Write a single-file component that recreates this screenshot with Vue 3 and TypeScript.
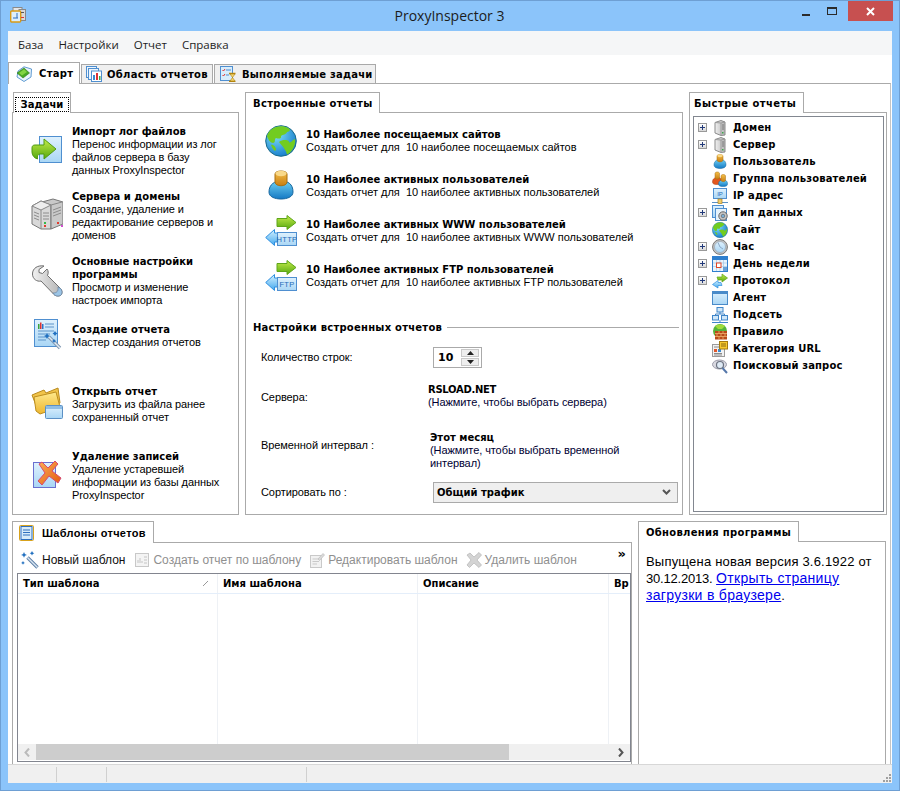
<script setup lang="ts">
interface Task { title: string[]; lines: string[]; icon: string; cls: string }
const tasks: Task[] = [
  { title: ['Импорт лог файлов'], lines: ['Перенос информации из лог', 'файлов сервера в базу', 'данных ProxyInspector'], icon: 'import', cls: 'h65' },
  { title: ['Сервера и домены'], lines: ['Создание, удаление и', 'редактирование серверов и', 'доменов'], icon: 'servers', cls: 'h65' },
  { title: ['Основные настройки', 'программы'], lines: ['Просмотр и изменение', 'настроек импорта'], icon: 'wrench', cls: 'h68' },
  { title: ['Создание отчета'], lines: ['Мастер создания отчетов'], icon: 'report', cls: 'h62' },
  { title: ['Открыть отчет'], lines: ['Загрузить из файла ранее', 'сохраненный отчет'], icon: 'folder', cls: 'h65' },
  { title: ['Удаление записей'], lines: ['Удаление устаревшей', 'информации из базы данных', 'ProxyInspector'], icon: 'delete', cls: 'h65' },
]
const reports = [
  { icon: 'globe', label: '', title: '10 Наиболее посещаемых сайтов', sub: 'Создать отчет для  10 наиболее посещаемых сайтов' },
  { icon: 'user', label: '', title: '10 Наиболее активных пользователей', sub: 'Создать отчет для  10 наиболее активных пользователей' },
  { icon: 'transfer', label: 'HTTP', title: '10 Наиболее активных WWW пользователей', sub: 'Создать отчет для  10 наиболее активных WWW пользователей' },
  { icon: 'transfer', label: 'FTP', title: '10 Наиболее активных FTP пользователей', sub: 'Создать отчет для  10 наиболее активных FTP пользователей' },
]
const tree = [
  { t: 'Домен', i: 'tower', e: true },
  { t: 'Сервер', i: 'tower', e: true },
  { t: 'Пользователь', i: 'user', e: false },
  { t: 'Группа пользователей', i: 'users', e: false },
  { t: 'IP адрес', i: 'ip', e: false },
  { t: 'Тип данных', i: 'datatype', e: true },
  { t: 'Сайт', i: 'globe', e: false },
  { t: 'Час', i: 'clock', e: true },
  { t: 'День недели', i: 'calendar', e: true },
  { t: 'Протокол', i: 'protocol', e: true },
  { t: 'Агент', i: 'agent', e: false },
  { t: 'Подсеть', i: 'subnet', e: false },
  { t: 'Правило', i: 'rule', e: false },
  { t: 'Категория URL', i: 'category', e: false },
  { t: 'Поисковый запрос', i: 'search', e: false },
]
const menu = ['База', 'Настройки', 'Отчет', 'Справка']
</script>

<template>
  <svg class="defs" aria-hidden="true">
    <defs>
      <linearGradient id="gBlue" x1="0" y1="0" x2="0" y2="1"><stop offset="0" stop-color="#dff1fd"/><stop offset="1" stop-color="#a9d6f5"/></linearGradient>
      <linearGradient id="gGreen" x1="0" y1="0" x2="0" y2="1"><stop offset="0" stop-color="#c4ec4a"/><stop offset="1" stop-color="#56a80f"/></linearGradient>
      <linearGradient id="gArrow" x1="0" y1="0" x2="0" y2="1"><stop offset="0" stop-color="#d6f2ff"/><stop offset="1" stop-color="#42a8ee"/></linearGradient>
      <linearGradient id="gGrey" x1="0" y1="0" x2="1" y2="0"><stop offset="0" stop-color="#f1f1f1"/><stop offset="1" stop-color="#b3b3b3"/></linearGradient>
      <linearGradient id="gOrange" x1="0" y1="0" x2="0" y2="1"><stop offset="0" stop-color="#f5c04a"/><stop offset="1" stop-color="#c97e12"/></linearGradient>
      <linearGradient id="gBody" x1="0" y1="0" x2="0" y2="1"><stop offset="0" stop-color="#6fd0f2"/><stop offset="1" stop-color="#1479c4"/></linearGradient>
      <linearGradient id="gFolder" x1="0" y1="0" x2="0" y2="1"><stop offset="0" stop-color="#ffe98c"/><stop offset="1" stop-color="#edb62f"/></linearGradient>
      <radialGradient id="gSea" cx=".35" cy=".3" r=".8"><stop offset="0" stop-color="#7fe0f7"/><stop offset="1" stop-color="#0e74c8"/></radialGradient>
      <linearGradient id="gX" x1="0" y1="0" x2="1" y2="1"><stop offset="0" stop-color="#fbae55"/><stop offset="1" stop-color="#e2590f"/></linearGradient>
    </defs>
    <symbol id="import" viewBox="0 0 32 32">
      <rect x="8.500" y="1.500" width="22" height="26" fill="url(#gBlue)" stroke="#4f8fd0"/>
      <path d="M1 13 C1 11 2 10 4 10 H13 V4 L25 14 L13 24 V19 H9 C7 19 6 21 6.500 24 C3 23 1 20 1 17 Z" fill="url(#gGreen)" stroke="#4f9a10"/>
    </symbol>
    <symbol id="servers" viewBox="0 0 32 32">
      <path d="M1 8 L10 3 L20 7 L20 31 L10 31 L1 26 Z" fill="#d9d9d9" stroke="#777"/>
      <path d="M11 4 L22 1 L32 4 L32 26 L20 31 L20 7 Z" fill="#c9c9c9" stroke="#777"/>
      <path d="M1 8 L10 3 L20 7 L10 12 Z" fill="#eee" stroke="#888"/>
      <path d="M10 12 V31 M20 7 L31 4" stroke="#888" fill="none"/>
      <path d="M3 14 L8 16 M3 17 L8 19 M3 20 L8 22 M12 15 H18 M12 18 H18 M12 21 H18 M22 12 L30 9 M22 15 L30 12 M22 18 L30 15" stroke="#8c8c8c"/>
      <rect x="13" y="24" width="2" height="2" fill="#39b54a"/><rect x="13" y="27" width="2" height="2" fill="#e23b2e"/>
      <rect x="26" y="24" width="2" height="2" fill="#e23b2e"/><rect x="30" y="27" width="2" height="2" fill="#d24fd0"/>
    </symbol>
    <symbol id="wrench" viewBox="0 0 32 32">
      <path d="M13 1 C7 0 1.500 3 1.500 9 C1.500 14 6 17 10 16 L23 29.500 C25 31.500 29 31.500 30.500 29.500 C31.500 27.500 31 25 29.500 23.500 L16.500 10.500 C17.500 8 17.500 6 16 4 L11.500 8.500 L8 7.500 L8 4.500 Z" fill="url(#gGrey)" stroke="#6f6f6f" stroke-linejoin="round"/>
      <path d="M23 29.500 C25 31.500 29 31.500 30.500 29.500 C31.500 27.500 31 25 29.500 23.500 L27 22 C27.500 26 26 28 22 28 Z" fill="#9cc5e6" stroke="#6d88a5" stroke-width=".8"/>
    </symbol>
    <symbol id="report" viewBox="0 0 32 32">
      <rect x="3.500" y="0.500" width="23" height="27" fill="url(#gBlue)" stroke="#4f8fd0"/>
      <rect x="7" y="5" width="1.500" height="5" fill="#39a33a"/><rect x="9" y="3.500" width="1.500" height="6.500" fill="#d33"/><rect x="11" y="5" width="1.500" height="5" fill="#2a74c9"/>
      <path d="M14 5 H23 M14 8 H23 M7 12 H23 M7 15 H19 M7 18 H17 M7 21 H15" stroke="#5c93c9"/>
      <path d="M18 18 L29 29" stroke="#7f97b1" stroke-width="3.400"/><path d="M18 18 L29 29" stroke="#e1ebf4" stroke-width="1.400"/>
      <path d="M16 14 l1 2 2 1 -2 1 -1 2 -1 -2 -2 -1 2 -1z M24 12 l1 1.500 1.500 1 -1.500 1 -1 1.500 -1 -1.500 -1.500 -1 1.500 -1z M23 20 l.8 1.200 1.200 .8 -1.200 .8 -.8 1.200 -.8 -1.200 -1.200 -.8 1.200 -.8z" fill="#2170c0"/>
    </symbol>
    <symbol id="folder" viewBox="0 0 32 32">
      <path d="M1 8 L13 3 L15 6 L27 1 L29 16 L8 26 Z" fill="#f1c44a" stroke="#b98a1d"/>
      <path d="M3 10 L25 5 L29 20 L9 27 L5 24 Z" fill="url(#gFolder)" stroke="#bd8e1f"/>
      <rect x="14.500" y="18.500" width="17" height="13" rx="1" fill="url(#gBlue)" stroke="#5b90c5"/>
      <rect x="15" y="19" width="16" height="3" fill="#8fbde5"/>
    </symbol>
    <symbol id="delete" viewBox="0 0 32 32">
      <rect x="2.500" y="3.500" width="22" height="25" fill="url(#gBlue)" stroke="#6a6fd0"/>
      <path d="M8 5 L11 3 L17 9 L24 2 L27 5 L21 12 L30 19 L27 24 L18 17 L11 26 L7 22 L14 14 Z" fill="url(#gX)" stroke="#d64a70"/>
    </symbol>
    <symbol id="globe" viewBox="0 0 32 32">
      <circle cx="16" cy="16" r="15.300" fill="url(#gSea)" stroke="#1a6a8a"/>
      <path d="M7 4 C10 1 19 0 23 3 C26 4 25 7 22 7 C21 10 18 9 16 11 C17 14 13 14 11 13 C9 14 11 18 8 18 C5 18 3 14 2 11 C3 8 4 6 7 4Z" fill="#72cc20"/>
      <path d="M14 17 C18 14 22 15 24 16 C23 18 26 18 28 15 L30 14 C31 19 28 26 23 29 C21 30 22 27 20 25 C19 22 16 20 14 17Z" fill="#72cc20"/>
      <path d="M6 20 C8 19 11 22 11 25 C10 27 8 25 6 20Z" fill="#72cc20"/>
    </symbol>
    <symbol id="user" viewBox="0 0 32 32">
      <path d="M4 22 C4 14 10 11 16 11 C23 11 28 14 28 22 C28 27 22 29 16 29 C10 29 4 27 4 22Z" fill="url(#gBody)" stroke="#17679f"/>
      <path d="M10 4 C10 0 22 0 22 4 V12 C22 17 10 17 10 12 Z" fill="url(#gOrange)" stroke="#a86f10"/>
      <ellipse cx="16" cy="3.500" rx="5.500" ry="2.800" fill="#f9d98a"/>
    </symbol>
    <symbol id="users" viewBox="0 0 32 32">
      <path d="M1 22 C1 15 6 13 11 13 C18 13 19 17 19 22 C19 26 15 27 10 27 C5 27 1 26 1 22Z" fill="#e2571e" stroke="#a4401a"/>
      <path d="M6 5 C6 1 15 1 15 5 V14 C15 17 6 17 6 14 Z" fill="url(#gOrange)" stroke="#a86f10"/>
      <path d="M13 26 C13 20 17 18 22 18 C28 18 31 20 31 26 C31 30 27 31 22 31 C17 31 13 30 13 26Z" fill="url(#gBody)" stroke="#17679f"/>
      <path d="M18 10 C18 6 27 6 27 10 V19 C27 22 18 22 18 19 Z" fill="url(#gOrange)" stroke="#a86f10"/>
    </symbol>
    <symbol id="transfer" viewBox="0 0 32 32">
      <path d="M12 3.500 H22 V.5 L31 7.500 L22 14.500 V11.500 H12 Z" fill="url(#gGreen)" stroke="#5fa51a"/>
      <path d="M0.700 22.500 L9.500 14.500 V18 H13 V27 H9.500 V30.500 Z" fill="url(#gArrow)" stroke="#2e8fe0"/>
      <rect x="12.500" y="17.500" width="19" height="13" fill="url(#gBlue)" stroke="#4f8fd0"/>
    </symbol>
    <symbol id="tower" viewBox="0 0 16 16">
      <path d="M3 2.500 L9 .5 L13 2 V15 L9 15.500 L3 13 Z" fill="url(#gGrey)" stroke="#8a8a8a"/>
      <path d="M9 3 V15.500 M3 2.500 L9 3 L13 2" fill="none" stroke="#9a9a9a"/>
      <path d="M10 5 H12 M10 7 H12 M10 9 H12" stroke="#777"/><rect x="10" y="12" width="1.500" height="1.500" fill="#3ba84b"/>
    </symbol>
    <symbol id="ip" viewBox="0 0 16 16">
      <rect x="1.500" y="0.500" width="13" height="10" fill="url(#gBlue)" stroke="#4f8fd0"/>
      <path d="M0 14.500 H16" stroke="#5b90c5"/><rect x="6" y="11" width="4" height="4.500" fill="#f2cd6a" stroke="#a57f1f" stroke-width=".7"/>
    </symbol>
    <symbol id="datatype" viewBox="0 0 16 16">
      <rect x=".5" y=".5" width="11" height="12" fill="url(#gBlue)" stroke="#4f8fd0"/>
      <rect x="3.500" y="3.500" width="11" height="12" fill="#e6f3fc" stroke="#4f8fd0"/>
      <circle cx="11" cy="11" r="4.200" fill="#c9c9c9" stroke="#666"/><circle cx="11" cy="11" r="1.800" fill="#7bb0d8" stroke="#555" stroke-width=".6"/>
    </symbol>
    <symbol id="clock" viewBox="0 0 16 16">
      <circle cx="8" cy="8" r="7.400" fill="#c5c5c5" stroke="#777"/><circle cx="8" cy="8" r="5.500" fill="url(#gBlue)" stroke="#8f9eae" stroke-width=".6"/>
      <path d="M8 8 L6 3.500 M8 8 L11 10" stroke="#8aa8c8" fill="none"/>
    </symbol>
    <symbol id="calendar" viewBox="0 0 16 16">
      <rect x=".5" y=".5" width="15" height="15" fill="#e9f4fc" stroke="#2f7fce"/><rect x="1" y="1" width="14" height="3" fill="#2f7fce"/>
      <path d="M1 7 H15 M1 10.500 H15 M4.500 4 V15 M8 4 V15 M11.500 4 V15" stroke="#a6c9e8" stroke-width=".7"/>
      <rect x="4.500" y="7" width="4.500" height="4.500" fill="#fff" stroke="#e04626"/><rect x="11" y="11" width="4" height="4" fill="#6aa2d6"/>
    </symbol>
    <symbol id="protocol" viewBox="0 0 16 16">
      <path d="M5 4 H10 V1 L15.500 5 L10 9 V7 H6 Z" fill="url(#gGreen)" stroke="#5fa51a" stroke-width=".7"/>
      <path d="M.5 11.500 L6 7.500 V9.500 H9 L10 12.500 H6 V15 Z" fill="url(#gArrow)" stroke="#2e8fe0" stroke-width=".7"/>
    </symbol>
    <symbol id="agent" viewBox="0 0 16 16">
      <rect x=".5" y="1.500" width="15" height="13" fill="url(#gBlue)" stroke="#4a8bc9"/><rect x="1" y="2" width="14" height="2" fill="#4a8bc9"/>
    </symbol>
    <symbol id="subnet" viewBox="0 0 16 16">
      <rect x="5" y=".5" width="6" height="4.500" fill="#cfe7f9" stroke="#3f85c9"/>
      <path d="M8 5 V7 M3.500 7 H12.500 V8 M3.500 7 V8 M0 15.500 H16 M8 13 V15" stroke="#3f85c9" fill="none"/>
      <rect x=".5" y="8.500" width="6" height="4.500" fill="#cfe7f9" stroke="#3f85c9"/><rect x="9.500" y="8.500" width="6" height="4.500" fill="#cfe7f9" stroke="#3f85c9"/>
    </symbol>
    <symbol id="rule" viewBox="0 0 16 16">
      <circle cx="8" cy="7" r="7" fill="#55b43a"/><path d="M3 2 C6 0 11 0 13 2 L10 5 H6 Z" fill="#9fdb3b"/>
      <path d="M3 7 H15 V15.500 H3 Z" fill="#b84a18"/><path d="M3 9.500 H15 M3 12.500 H15 M7 7 V9.500 M11 7 V9.500 M5 9.500 V12.500 M9 9.500 V12.500 M13 9.500 V12.500 M7 12.500 V15.500 M11 12.500 V15.500" stroke="#f0b26e" stroke-width=".8"/>
    </symbol>
    <symbol id="category" viewBox="0 0 16 16">
      <rect x=".5" y="3.500" width="12" height="12" fill="#f2f2f2" stroke="#9b9b9b"/>
      <path d="M2 6 H7 M2 12.500 H10 M2 14 H10" stroke="#8a8a8a"/><rect x="2" y="8" width="3" height="3" fill="#e0562a"/><rect x="6" y="8" width="3" height="3" fill="#3b89d1"/>
      <rect x="7.500" y=".5" width="8" height="7.500" fill="#f7c92f" stroke="#a57a10"/><path d="M9 3 H14 M9 5 H14" stroke="#8f6a10"/>
    </symbol>
    <symbol id="search" viewBox="0 0 16 16">
      <ellipse cx="7.500" cy="6.500" rx="7" ry="4.500" fill="#d8d8e0" stroke="#9a9aa8"/>
      <circle cx="8" cy="7" r="3.500" fill="#dfeaf5" stroke="#6b7280" stroke-width="1.200"/>
      <path d="M10.500 10 L15 15" stroke="#5577aa" stroke-width="2"/>
    </symbol>
    <symbol id="wand" viewBox="0 0 20 18">
      <path d="M7.500 6.500 L17.500 16.500" stroke="#5d7fa6" stroke-width="3.400"/><path d="M7.500 6.500 L17.500 16.500" stroke="#d9e6f2" stroke-width="1.400"/>
      <path d="M4 1 l.9 2 2 .9 -2 .9 -.9 2 -.9 -2 -2 -.9 2 -.9z M12 0 l.8 1.500 1.500 .8 -1.500 .8 -.8 1.500 -.8 -1.500 -1.500 -.8 1.500 -.8z M3 10 l.7 1.200 1.200 .7 -1.200 .7 -.7 1.200 -.7 -1.200 -1.200 -.7 1.200 -.7z" fill="#2170c0"/>
    </symbol>
    <symbol id="tplReport" viewBox="0 0 16 16">
      <rect x="1.500" y="1.500" width="13" height="13" fill="#f4f4f4" stroke="#c8c8c8"/><path d="M4 11 V8 M6 11 V6 M8 11 V9 M10 5 H13 M10 8 H13 M10 11 H13" stroke="#c4c4c4"/>
    </symbol>
    <symbol id="tplEdit" viewBox="0 0 16 16">
      <rect x="1.500" y="3.500" width="11" height="12" fill="#f2f2f2" stroke="#c9c9c9"/><path d="M3.500 7 H10 M3.500 9.500 H10 M3.500 12 H8" stroke="#c9c9c9"/><path d="M9 7 L14 1.500 L15.500 3 L10.500 8.500 Z" fill="#dadada" stroke="#bdbdbd" stroke-width=".7"/>
    </symbol>
    <symbol id="tplDel" viewBox="0 0 16 16">
      <path d="M1 3 L4 1 L8 5 L13 0.500 L15.500 3 L11 8 L15.500 13 L13 15.500 L8 11 L3.500 15.500 L1 13 L5 8 Z" fill="#d4d4d4" stroke="#b5b5b5" stroke-width=".7"/>
    </symbol>
    <symbol id="tplTab" viewBox="0 0 16 16">
      <rect x=".5" y=".5" width="14" height="15" rx="1" fill="#e7f3fc" stroke="#d8a21c" stroke-width="1"/><rect x="2" y="1.500" width="11" height="13" fill="#d7ebfa" stroke="#2f6fbf"/><path d="M4 5 H11 M4 7.500 H11 M4 10 H11" stroke="#2f6fbf"/>
    </symbol>
    <symbol id="tabStart" viewBox="0 0 16 16">
      <path d="M2 5 L8 .8 L15.500 3 L15 11 L8 15.500 L1 11 Z" fill="#eaf4fc" stroke="#3b84c6" stroke-width=".8"/>
      <path d="M1 7 L8 2 L13.500 7 L7 12 Z" fill="#48a824" stroke="#2e7a17" stroke-width=".6"/><path d="M3 7 L8 3.200 L11 6 L6 9.500 Z" fill="#83d443"/>
    </symbol>
    <symbol id="tabReports" viewBox="0 0 16 16">
      <rect x=".5" y=".5" width="10" height="11" fill="#eef6fd" stroke="#4f8fd0"/><rect x="2.500" y="2.500" width="10" height="11" fill="#eef6fd" stroke="#4f8fd0"/><rect x="5.500" y="5" width="10" height="10.500" fill="#fff" stroke="#4f8fd0"/>
      <rect x="7" y="9" width="2" height="5" fill="#3b89d1"/><rect x="10" y="7" width="2" height="7" fill="#d33"/><rect x="13" y="10" width="1.500" height="4" fill="#3ba84b"/>
    </symbol>
    <symbol id="tabTasks" viewBox="0 0 16 16">
      <rect x=".5" y=".5" width="12" height="14" fill="#d9edfb" stroke="#4f8fd0"/><path d="M2.500 4 l1 1 1.500-2 M2.500 9 l1 1 1.500-2" stroke="#d33" fill="none"/><path d="M6 4 H11 M6 9 H9" stroke="#4f8fd0"/>
      <path d="M9 7.500 H15.500 M9 15.500 H15.500" stroke="#b8860b" stroke-width="1.400"/><path d="M10 8 H15 L12.500 11.500 L15 15 H10 L12.500 11.500 Z" fill="#f7d56a" stroke="#a87f10" stroke-width=".6"/>
    </symbol>
    <symbol id="appIcon" viewBox="0 0 16 16">
      <rect x="3" y=".5" width="9" height="11" fill="#e6e6e6" stroke="#8a8a8a"/><rect x="9" y="2.500" width="6.500" height="11" fill="#d8d8d8" stroke="#888"/>
      <rect x=".7" y="4" width="10" height="11" rx="1" fill="#dceefb" stroke="#d99a14" stroke-width="1.400"/><path d="M3 11 H8 M7 6 V11" stroke="#2f6fbf"/><rect x="11" y="5" width="3" height="1" fill="#555"/><rect x="11" y="10" width="3" height="1" fill="#d33"/>
    </symbol>
  </svg>

  <div class="window">
    <header class="titlebar">
      <svg class="app-icon"><use href="#appIcon"/></svg>
      <div class="title">ProxyInspector 3</div>
      <div class="winbtns">
        <div class="winbtn"><span class="min"></span></div>
        <div class="winbtn"><span class="max"></span></div>
        <div class="winbtn close">
          <svg width="9" height="9" viewBox="0 0 9 9"><path d="M1 1 L8 8 M8 1 L1 8" stroke="#fff" stroke-width="2"/></svg>
        </div>
      </div>
    </header>

    <div class="client">
      <nav class="menu"><span v-for="m in menu" :key="m" class="menu-item">{{ m }}</span></nav>

      <div class="main-tabs">
        <div class="mtab active"><svg class="i16"><use href="#tabStart"/></svg><span>Старт</span></div>
        <div class="mtab r1"><svg class="i16"><use href="#tabReports"/></svg><span>Область отчетов</span></div>
        <div class="mtab r2"><svg class="i16"><use href="#tabTasks"/></svg><span>Выполняемые задачи</span></div>
      </div>

      <main class="main">
        <section class="top">
          <div class="panel">
            <div class="tab t-tasks"><span class="focus">Задачи</span></div>
            <div class="pane tasks">
              <div v-for="t in tasks" :key="t.icon" class="task" :class="t.cls">
                <svg class="i32" :class="'ic-' + t.icon"><use :href="'#' + t.icon"/></svg>
                <div class="task-text">
                  <div v-for="l in t.title" :key="l" class="b">{{ l }}</div>
                  <div v-for="l in t.lines" :key="l" class="r">{{ l }}</div>
                </div>
              </div>
            </div>
          </div>

          <div class="panel">
            <div class="tab t-built">Встроенные отчеты</div>
            <div class="pane built">
              <div v-for="r in reports" :key="r.title" class="report">
                <svg class="i32" viewBox="0 0 32 32">
                  <use :href="'#' + r.icon"/>
                  <text v-if="r.label" x="22" y="27" class="icon-label" text-anchor="middle">{{ r.label }}</text>
                </svg>
                <div>
                  <div class="b">{{ r.title }}</div>
                  <div class="r pre rsub">{{ r.sub }}</div>
                </div>
              </div>
              <div class="group"><span class="b gt">Настройки встроенных отчетов</span><span class="gl"></span></div>
              <div class="field f-count">
                <span class="r lbl pre">Количество  строк:</span>
                <div class="spin"><span class="b num">10</span>
                  <div class="spin-btns">
                    <div class="sb"><svg width="7" height="4" viewBox="0 0 7 4"><path d="M3.500 0 L7 4 H0 Z" fill="#222"/></svg></div>
                    <div class="sb"><svg width="7" height="4" viewBox="0 0 7 4"><path d="M0 0 H7 L3.500 4 Z" fill="#222"/></svg></div>
                  </div>
                </div>
              </div>
              <div class="field f-srv">
                <span class="r lbl">Сервера:</span>
                <div class="val"><div class="b tight">RSLOAD.NET</div><div class="r navy">(Нажмите, чтобы выбрать сервера)</div></div>
              </div>
              <div class="field f-int">
                <span class="r lbl">Временной интервал :</span>
                <div class="val v2"><div class="b">Этот месяц</div><div class="r navy">(Нажмите, чтобы выбрать временной</div><div class="r navy">интервал)</div></div>
              </div>
              <div class="field f-sort">
                <span class="r lbl">Сортировать по :</span>
                <div class="select"><span class="b">Общий трафик</span>
                  <svg width="9" height="6" viewBox="0 0 9 6"><path d="M1 1 L4.500 4.500 L8 1" fill="none" stroke="#555" stroke-width="2"/></svg>
                </div>
              </div>
            </div>
          </div>

          <div class="panel">
            <div class="tab t-quick">Быстрые отчеты</div>
            <div class="pane quick">
              <div class="tree">
                <div v-for="n in tree" :key="n.t" class="node">
                  <span class="exp-slot"><span v-if="n.e" class="exp"></span></span>
                  <svg class="i16" viewBox="0 0 16 16">
                    <use :href="'#' + n.i"/>
                    <text v-if="n.i === 'ip'" x="8" y="8" class="ip-label" text-anchor="middle">IP</text>
                  </svg>
                  <span class="b">{{ n.t }}</span>
                </div>
              </div>
            </div>
          </div>
        </section>

        <section class="bottom">
          <div class="panel">
            <div class="tab t-tpl"><svg class="i16"><use href="#tplTab"/></svg><span class="tpl-t">Шаблоны отчетов</span></div>
            <div class="pane tpl">
              <div class="toolbar">
                <div class="tool first"><svg class="wand"><use href="#wand"/></svg><span>Новый шаблон</span></div>
                <div class="tool off"><svg class="i16"><use href="#tplReport"/></svg><span>Создать отчет по шаблону</span></div>
                <div class="tool off"><svg class="i16"><use href="#tplEdit"/></svg><span>Редактировать шаблон</span></div>
                <div class="tool off"><svg class="i16"><use href="#tplDel"/></svg><span>Удалить шаблон</span></div>
                <span class="more">»</span>
              </div>
              <div class="list">
                <div class="head">
                  <div class="col c1"><span class="b">Тип шаблона</span><svg width="5" height="5" viewBox="0 0 5 5"><path d="M0 5 L5 0" stroke="#999"/></svg></div>
                  <div class="col c2"><span class="b">Имя шаблона</span></div>
                  <div class="col c3"><span class="b">Описание</span></div>
                  <div class="col c4"><span class="b">Вр</span></div>
                </div>
                <div class="rows"><div class="cl c1"></div><div class="cl c2"></div><div class="cl c3"></div><div class="cl c4"></div></div>
                <div class="hscroll">
                  <svg class="ar" width="6" height="9" viewBox="0 0 6 9"><path d="M5 .5 L1.500 4.500 L5 8.500" fill="none" stroke="#bbb" stroke-width="2"/></svg>
                  <div class="track"><div class="thumb"></div></div>
                  <svg class="ar" width="6" height="9" viewBox="0 0 6 9"><path d="M1 .5 L4.500 4.500 L1 8.500" fill="none" stroke="#555" stroke-width="2"/></svg>
                </div>
              </div>
            </div>
          </div>
          <div class="panel">
            <div class="tab t-upd">Обновления программы</div>
            <div class="pane upd"><span class="upd-a">Выпущена новая версия 3.6.1922 от</span> <span class="upd-d">30.12.2013.</span> <a class="link">Открыть страницу загрузки в браузере</a>.</div>
          </div>
        </section>
      </main>

      <footer class="status">
        <span class="st s1"></span><span class="st s2"></span><span class="st s3"></span><span class="st s4"></span>
        <svg class="grip" width="10" height="10" viewBox="0 0 10 10"><path d="M7 1h2v2H7z M4 4h2v2H4z M7 4h2v2H7z M1 7h2v2H1z M4 7h2v2H4z M7 7h2v2H7z" fill="#a0a0a0"/></svg>
      </footer>
    </div>
  </div>
</template>

<style>
html, body { margin: 0; padding: 0; background: #8bc4fa; }
</style>

<style scoped>
.defs { display: block; width: 0; height: 0; overflow: hidden; }
.window { width: 900px; height: 791px; box-sizing: border-box; border: 1px solid #6e9fd3; background: #8bc4fa; display: flex; flex-direction: column; font: 11px "Liberation Sans", Arial, sans-serif; color: #000; overflow: hidden; }
.titlebar { height: 30px; flex: none; display: flex; align-items: flex-start; }
.app-icon { width: 16px; height: 16px; margin: 6px 0 0 9px; flex: none; }
.title { flex: 1; text-align: center; font: 14px/30px "Open Sans", sans-serif; color: #1c1c1c; margin-left: 80px; white-space: nowrap; }
.winbtns { display: flex; margin-right: 6px; flex: none; align-items: flex-start; }
.winbtn { width: 26px; height: 20px; display: flex; align-items: center; justify-content: center; }
.close { width: 45px; background: #c75050; margin-left: 3px; }
.min { display: block; width: 8px; height: 2px; background: #2b2b2b; margin-top: 8px; }
.max { display: block; width: 8px; height: 5px; border: 1px solid #2b2b2b; border-top-width: 2px; }

.client { flex: 1; margin: 0 7px 7px; display: flex; flex-direction: column; min-height: 0; background: #fff; }
.menu { height: 24px; flex: none; background: #f5f6f7; display: flex; align-items: center; padding: 2px 0 0 10px; font: 11.5px "Open Sans", sans-serif; color: #1e1e1e; gap: 15px; box-sizing: border-box; }

.main-tabs { height: 28px; flex: none; display: flex; align-items: flex-end; background: #fff; }
.mtab { display: flex; align-items: center; box-sizing: border-box; height: 19px; border: 1px solid #a9a9a9; border-bottom: none; background: #f0f0f0; font: bold 10px "DejaVu Sans", sans-serif; letter-spacing: .3px; gap: 5px; padding-left: 4px; margin-left: 1px; white-space: nowrap; flex: none; }
.mtab.active { height: 22px; width: 72px; margin: 0 0 -1px; background: #fff; padding-left: 7px; position: relative; z-index: 1; gap: 7px; }
.mtab.r1 { width: 132px; }
.mtab.r2 { width: 162px; padding-left: 5px; gap: 6px; letter-spacing: .22px; }

.main { flex: 1; min-height: 0; box-sizing: border-box; border-top: 1px solid #aaa; border-right: 1px solid #c4c4c4; margin-right: 1px; padding: 8px 0 0 4px; display: flex; flex-direction: column; gap: 6px; background: #fff; }
.top { display: grid; grid-template-columns: 227px 438px 198px; column-gap: 6px; height: 423px; flex: none; }
.bottom { display: grid; grid-template-columns: 620px 248px; column-gap: 6px; flex: 1; min-height: 0; }
.panel { display: flex; flex-direction: column; min-height: 0; min-width: 0; }
.tab { flex: none; box-sizing: border-box; height: 21px; margin-bottom: -1px; border: 1px solid #aaa; border-bottom: none; background: #fff; position: relative; z-index: 1; display: flex; align-items: center; font: bold 10px "DejaVu Sans", sans-serif; letter-spacing: .3px; white-space: nowrap; }
.pane { flex: 1; min-height: 0; box-sizing: border-box; border: 1px solid #aaa; background: #fff; }
.t-tasks { width: 58px; margin-left: 1px; padding: 3px 2px 1px; align-self: flex-start; letter-spacing: .05px; }
.focus { outline: 1px dotted #000; padding: 1px 3px; display: block; width: 100%; box-sizing: border-box; text-align: center; }
.t-built { width: 135px; padding-left: 7px; }
.t-quick { width: 115px; padding-left: 4px; letter-spacing: .45px; }
.t-tpl { width: 142px; height: 22px; padding-left: 6px; gap: 6px; }
.t-upd { width: 161px; padding-left: 7px; }
.tpl-t { font: bold 11px "Liberation Sans", sans-serif; letter-spacing: .3px; margin-left: 1px; }

.b { font: bold 10px/13px "DejaVu Sans", sans-serif; }
.r { font: 11px/13px "Liberation Sans", sans-serif; color: #000; letter-spacing: -.08px; white-space: nowrap; }
.pre { white-space: pre; }
.rsub { letter-spacing: -.02px; }
.navy { color: #000033; }
.tight { letter-spacing: -.3px; }
.i16 { width: 16px; height: 16px; flex: none; display: block; }
.i32 { width: 32px; height: 32px; flex: none; display: block; }
.icon-label { font: 7.500px "Liberation Sans", sans-serif; fill: #1c6bb8; letter-spacing: .3px; }
.ip-label { font: 6px "Liberation Sans", sans-serif; fill: #1c6bb8; }

.tasks { padding-top: 12px; }
.task { display: flex; box-sizing: border-box; padding-left: 18px; }
.ic-import { margin-top: 10px; }
.ic-servers { margin-top: 8px; }
.ic-wrench { margin-top: 10px; }
.ic-report { margin-top: -4px; }
.ic-folder { margin-top: 2px; }
.ic-delete { margin-top: 9px; }
.task-text { margin-left: 9px; }
.h65 { height: 65px; }
.h68 { height: 68px; }
.h62 { height: 62px; }

.built { padding: 5px 0 0 19px; }
.report { display: flex; height: 45px; align-items: center; gap: 9px; }
.group { display: flex; align-items: center; margin: 23px 3px 0 -12px; height: 13px; }
.gt { white-space: nowrap; letter-spacing: .25px; }
.gl { flex: 1; height: 1px; background: #aaa; margin-left: 5px; }
.field { display: flex; margin-left: -12px; padding-left: 8px; }
.lbl { width: 172px; flex: none; }
.f-count { margin-top: 12px; height: 22px; align-items: center; }
.spin { width: 49px; height: 21px; box-sizing: border-box; border: 1px solid #aaa; display: flex; align-items: center; justify-content: space-between; padding: 0 2px 0 4px; }
.num { font-size: 11px; }
.spin-btns { display: flex; flex-direction: column; gap: 1px; }
.sb { width: 18px; background: #eee; border: 1px solid #c9c9c9; box-sizing: border-box; display: flex; align-items: center; justify-content: center; height: 8px; }
.f-srv { margin-top: 13px; align-items: center; height: 35px; }
.f-srv .lbl { margin-top: -2px; }
.f-srv .val { margin-left: -5px; margin-top: -6px; }
.f-int { margin-top: 10px; height: 48px; align-items: center; }
.f-int .lbl { margin-top: -10px; }
.f-int .val { margin-left: -3px; }
.val { flex: 1; }
.f-sort { margin-top: 7px; height: 22px; align-items: center; }
.select { width: 245px; height: 21px; box-sizing: border-box; border: 1px solid #aaa; background: #efefef; display: flex; align-items: center; justify-content: space-between; padding: 0 6px 0 3px; }

.quick { padding: 3px 2px 2px 3px; }
.tree { height: 100%; box-sizing: border-box; border: 1px solid #828790; padding: 2px 0 0 4px; }
.node { display: flex; align-items: center; height: 17px; }
.exp-slot { width: 14px; flex: none; }
.exp { display: block; width: 9px; height: 9px; box-sizing: border-box; border: 1px solid #999; background: linear-gradient(#fff, #d8d8d8); position: relative; }
.exp::before { content: ""; position: absolute; left: 1px; top: 3px; width: 5px; height: 1px; background: #223a7a; }
.exp::after { content: ""; position: absolute; left: 3px; top: 1px; width: 1px; height: 5px; background: #223a7a; }
.node .b { margin-left: 5px; letter-spacing: .15px; }

.tpl { border-bottom: none; padding-left: 4px; display: flex; flex-direction: column; }
.toolbar { height: 30px; flex: none; display: flex; align-items: center; padding: 3px 0 0 3px; position: relative; box-sizing: border-box; }
.wand { width: 20px; height: 18px; flex: none; display: block; }
.tool { display: flex; align-items: center; gap: 3px; margin-right: 8px; color: #111; font: 12px "Liberation Sans", sans-serif; white-space: nowrap; }
.tool.first { margin-right: 9px; gap: 2px; }
.tool.off { color: #8f8f8f; }
.more { position: absolute; right: 5px; top: 4px; font: bold 13px/14px "DejaVu Sans", sans-serif; }
.list { height: 189px; flex: none; box-sizing: border-box; border: 1px solid #82858f; display: flex; flex-direction: column; overflow: hidden; }
.head { height: 19px; flex: none; display: flex; border-bottom: 1px solid #e4eefa; }
.col { box-sizing: border-box; border-right: 1px solid #eef1f5; padding-left: 5px; display: flex; align-items: center; white-space: nowrap; overflow: hidden; }
.c1 { width: 200px; flex: none; justify-content: space-between; padding-right: 9px; }
.c2 { width: 200px; flex: none; }
.c3 { width: 191px; flex: none; }
.c4 { flex: 1; border-right: none; }
.rows { height: 150px; flex: none; display: flex; }
.cl { box-sizing: border-box; border-right: 1px solid #eef1f5; }
.cl.c4 { border-right: none; }
.hscroll { height: 16px; flex: none; background: #f0f0f0; display: flex; align-items: center; margin-bottom: 2px; }
.ar { flex: none; margin: 0 6px; }
.track { flex: 1; height: 100%; }
.thumb { width: 473px; height: 100%; background: #cdcdcd; }

.upd { border-bottom: none; padding: 12px 6px 0 7px; font: 13px/16px "Liberation Sans", sans-serif; }
.upd-a { letter-spacing: .2px; }
.upd-d { letter-spacing: -.2px; }
.link { color: #0000ee; text-decoration: underline; font-size: 14px; line-height: 16px; letter-spacing: .3px; }

.status { height: 19px; flex: none; background: #f0f0f0; border-top: 1px solid #d7d7d7; box-sizing: border-box; display: flex; position: relative; padding-top: 2px; }
.st { display: block; box-sizing: border-box; height: 15px; border-right: 1px solid #d0d0d0; flex: none; }
.s1 { width: 49px; }
.s2 { width: 50px; }
.s3 { width: 200px; }
.s4 { border: none; }
.grip { position: absolute; right: 0; bottom: 0; }
</style>
